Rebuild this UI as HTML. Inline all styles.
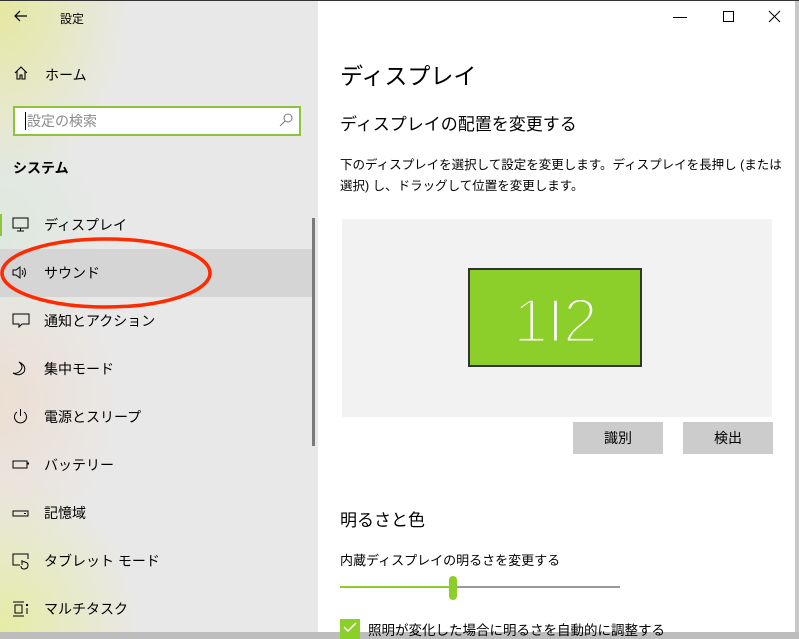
<!DOCTYPE html>
<html><head><meta charset="utf-8"><style>
*{margin:0;padding:0;box-sizing:border-box}
body{width:799px;height:632px;overflow:hidden;position:relative;font-family:"Liberation Sans","Noto Sans CJK JP",sans-serif;color:#000;background:#bdbdbd}
#side{position:absolute;left:0;top:0;width:318px;height:632px;background:
radial-gradient(ellipse 130px 180px at 0px 0px,rgba(228,232,150,.9),rgba(232,232,220,0)),
radial-gradient(ellipse 110px 120px at 0px 230px,rgba(215,232,215,.6),rgba(232,232,232,0)),
radial-gradient(ellipse 120px 150px at 0px 400px,rgba(238,218,200,.7),rgba(232,232,232,0)),
radial-gradient(ellipse 140px 160px at 0px 632px,rgba(230,236,160,.95),rgba(232,232,232,0)),
#e8e8e8}
#main{position:absolute;left:318px;top:0;width:477px;height:632px;background:#fff}
#topb{position:absolute;left:0;top:0;width:799px;height:1px;background:#333}
.t{position:absolute;white-space:nowrap}
.it{position:absolute;left:0;width:314px;height:48px;font-size:14px;z-index:2}
.it span{position:absolute;left:44px;top:14px}
.it svg{position:absolute;left:12px;top:16px}
</style></head><body>
<div id="side"></div>
<div style="position:absolute;left:0;top:249px;width:314px;height:48px;background:#d5d5d5;z-index:1"></div>
<div style="position:absolute;left:0;top:214px;width:2px;height:22px;background:#8cc43c;z-index:3"></div>
<div style="position:absolute;left:312px;top:218px;width:3px;height:228px;background:#7a7a7a;z-index:3"></div>
<div style="position:absolute;z-index:2;left:0;top:0;width:318px;height:200px">
<svg style="position:absolute;left:14px;top:10px" width="14" height="12"><path d="M6 1L1 6L6 11M1 6H13" stroke="#000" fill="none" stroke-width="1.2"/></svg>
<div class="t" style="left:60px;top:10px;font-size:12px">設定</div>
<svg style="position:absolute;left:14px;top:66px" width="14" height="14"><path d="M1 7L7 1L13 7M3 5V13H6V9H8V13H11V5" stroke="#000" fill="none" stroke-width="1.1"/></svg>
<div class="t" style="left:45px;top:65px;font-size:14px">ホーム</div>
<div style="position:absolute;left:13px;top:106px;width:288px;height:30px;border:2px solid #8cc43c;background:#fff"></div>
<div style="position:absolute;left:25px;top:112px;width:1px;height:18px;background:#000"></div>
<div class="t" style="left:27px;top:111px;font-size:14px;color:#8a8a8a">設定の検索</div>
<svg style="position:absolute;left:279px;top:113px" width="14" height="14"><circle cx="9" cy="5" r="4" stroke="#777" fill="none"/><path d="M6 8L1 13" stroke="#777"/></svg>
<div class="t" style="left:13px;top:158px;font-size:14px;font-weight:bold">システム</div>
</div>
<div class="it" style="top:201px"><svg width="18" height="16"><rect x="1" y="1" width="15" height="10" stroke="#000" fill="none"/><path d="M8.5 11V14M5 14H12" stroke="#000"/></svg><span>ディスプレイ</span></div>
<div class="it" style="top:249px"><svg width="18" height="16"><path d="M1 5H4L8 2V13L4 10H1Z M10 5Q12 7.5 10 10M12 3Q15 7.5 12 12" stroke="#000" fill="none"/></svg><span>サウンド</span></div>
<div class="it" style="top:297px"><svg width="18" height="16"><path d="M1 1H17V11H10L7 14V11H1Z" stroke="#000" fill="none"/></svg><span>通知とアクション</span></div>
<div class="it" style="top:345px"><svg width="18" height="16"><path d="M7 1Q13 6 7 11Q4 13 1 12Q7 16 12 11Q15 5 7 1Z" stroke="#000" fill="none"/></svg><span>集中モード</span></div>
<div class="it" style="top:393px"><svg width="18" height="16"><path d="M5 3A6 6 0 1 0 12 3M8.5 0V7" stroke="#000" fill="none"/></svg><span>電源とスリープ</span></div>
<div class="it" style="top:441px"><svg width="18" height="16"><rect x="1" y="4" width="14" height="7" stroke="#000" fill="none"/><path d="M15 6.5H17" stroke="#000" stroke-width="2"/></svg><span>バッテリー</span></div>
<div class="it" style="top:489px"><svg width="18" height="16"><rect x="1" y="6" width="15" height="5" stroke="#000" fill="none"/><path d="M12 8.5H14" stroke="#000"/></svg><span>記憶域</span></div>
<div class="it" style="top:537px"><svg width="18" height="18"><path d="M8 12H1V1H16V6" stroke="#000" fill="none"/><path d="M10 7V12M10 9Q12 8 14 9.5Q16 10 16 12Q16 16 12 16Q9 16 9 13" stroke="#000" fill="none"/></svg><span>タブレット モード</span></div>
<div class="it" style="top:585px"><svg width="18" height="16"><path d="M1 1H12M1 15H12M3 4H10V12H3Z" stroke="#000" fill="none"/><rect x="14" y="3" width="2" height="2"/><path d="M15 7V13" stroke="#000"/></svg><span>マルチタスク</span></div>
<svg style="position:absolute;left:0;top:236px;z-index:4" width="216" height="74"><ellipse cx="106" cy="37" rx="104" ry="34" stroke="#ff2a00" stroke-width="3.5" fill="none"/></svg>
<div id="main">
<div class="t" style="left:22px;top:57px;font-size:23px">ディスプレイ</div>
<div class="t" style="left:22px;top:110px;font-size:17px">ディスプレイの配置を変更する</div>
<div class="t" style="left:22px;top:155px;font-size:12.5px;line-height:21px">下のディスプレイを選択して設定を変更します。ディスプレイを長押し (または<br>選択) し、ドラッグして位置を変更します。</div>
<div style="position:absolute;left:24px;top:219px;width:430px;height:198px;background:#f2f2f2"></div>
<div style="position:absolute;left:150px;top:268px;width:174px;height:99px;background:#8cce2a;border:2px solid #333"></div>
<svg style="position:absolute;left:150px;top:268px" width="174" height="99"><text x="87" y="74" text-anchor="middle" font-family="Liberation Sans, sans-serif" font-size="62" fill="#fff" stroke="#8cce2a" stroke-width="3" letter-spacing="-1">1I2</text></svg>
<div style="position:absolute;left:255px;top:422px;width:90px;height:32px;background:#ccc;font-size:14px;text-align:center;line-height:32px">識別</div>
<div style="position:absolute;left:365px;top:422px;width:90px;height:32px;background:#ccc;font-size:14px;text-align:center;line-height:32px">検出</div>
<div class="t" style="left:22px;top:506px;font-size:17px">明るさと色</div>
<div class="t" style="left:22px;top:550px;font-size:13px">内蔵ディスプレイの明るさを変更する</div>
<div style="position:absolute;left:22px;top:586px;width:114px;height:2px;background:#8cce2a"></div>
<div style="position:absolute;left:136px;top:586px;width:166px;height:2px;background:#999"></div>
<div style="position:absolute;left:131px;top:576px;width:8px;height:24px;border-radius:4px;background:#8cce2a"></div>
<div style="position:absolute;left:22px;top:619px;width:20px;height:20px;background:#8cce2a"></div>
<svg style="position:absolute;left:24px;top:621px" width="16" height="11"><path d="M2 6L6 10L14 2" stroke="#fff" stroke-width="1.5" fill="none"/></svg>
<div class="t" style="left:50px;top:619px;font-size:13.5px">照明が変化した場合に明るさを自動的に調整する</div>
</div>
<div class="t" style="left:673px;width:14px;height:1px;background:#000;top:17px"></div>
<div style="position:absolute;left:723px;top:11px;width:11px;height:11px;border:1px solid #000"></div>
<svg style="position:absolute;left:768px;top:10px" width="13" height="13"><path d="M1 1L12 12M12 1L1 12" stroke="#000"/></svg>
<div style="position:absolute;left:795px;top:0;width:4px;height:632px;background:#c8c8c8"></div>
<div id="topb"></div>
</body></html>
